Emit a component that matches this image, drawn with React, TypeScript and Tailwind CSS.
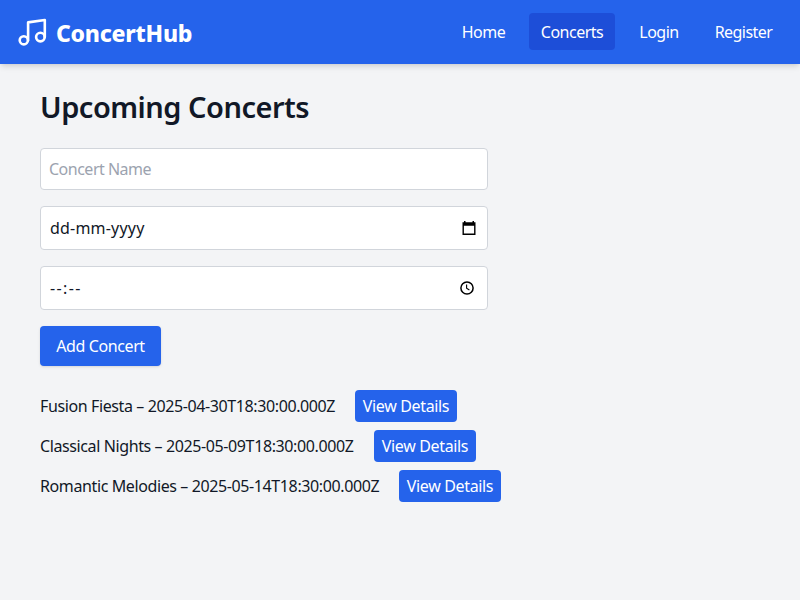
import React from "react";

const navBase = "flex h-[37px] items-center justify-center rounded pt-px";

const links = [
  { label: "Home", box: "w-[67px]", text: "tracking-[-0.5px]" },
  { label: "Concerts", box: "w-[86px] bg-[#1d4ed8]", text: "tracking-[-0.5px]" },
  { label: "Login", box: "w-[64px]", text: "tracking-[-0.5px]" },
  { label: "Register", box: "w-[81px]", text: "tracking-[-0.55px]" },
];

const concerts = [
  { name: "Fusion Fiesta", date: "2025-04-30T18:30:00.000Z", width: "w-[295px]" },
  { name: "Classical Nights", date: "2025-05-09T18:30:00.000Z", width: "w-[314px]" },
  { name: "Romantic Melodies", date: "2025-05-14T18:30:00.000Z", width: "w-[339px]" },
];

function NotesIcon() {
  return (
    <svg className="h-8 w-8" viewBox="0 0 32 32" fill="none" stroke="currentColor" strokeWidth="2.6" strokeLinecap="round" strokeLinejoin="round">
      <path d="M12.1 24.2V6.4L28.8 4v17" />
      <circle cx="7.8" cy="24.3" r="4.1" />
      <circle cx="24.4" cy="21.1" r="4.3" />
    </svg>
  );
}

function CalendarIcon() {
  return (
    <svg className="mb-px h-4 w-4" viewBox="0 0 16 16" fill="black">
      <path fillRule="evenodd" d="M3 1h1.5v1.3h7V1H13v1.3h1.5V15h-13V2.3H3V1zm-.1 4.7v7.9h10.2V5.7H2.9z" />
    </svg>
  );
}

function ClockIcon() {
  return (
    <svg className="h-4 w-4" viewBox="0 0 16 16" fill="none" stroke="black">
      <circle cx="8" cy="8" r="6.1" strokeWidth="1.5" />
      <path d="M7.6 4.5v3.8l2.8 1.7" strokeWidth="1.1" />
    </svg>
  );
}

export default function App() {
  return (
    <div className="min-h-[600px] bg-[#f3f4f6] font-['Noto_Sans','Open_Sans',sans-serif] text-base text-[#111827]">
      <nav className="flex h-16 items-center justify-between bg-[#2563eb] px-4 text-white shadow-md">
        <div className="flex items-center gap-2">
          <NotesIcon />
          <span className="pt-0.5 text-[23px] leading-8 font-extrabold tracking-[-0.25px]">ConcertHub</span>
        </div>
        <div className="flex gap-3 pb-px">
          {links.map((l) => (
            <a key={l.label} className={navBase + " " + l.box}>
              <span className={l.text}>{l.label}</span>
            </a>
          ))}
        </div>
      </nav>
      <main className="px-10 pt-6">
        <h1 className="mb-5 h-10 text-[29px] leading-[38px] font-semibold tracking-[-0.5px]">Upcoming Concerts</h1>
        <div className="flex w-[448px] flex-col gap-4">
          <div className="flex h-[42px] items-center rounded border border-[#d1d5db] bg-white px-2 tracking-[-0.5px] text-[#9ca3af]">Concert Name</div>
          <div className="flex h-11 items-center justify-between rounded border border-[#d1d5db] bg-white pr-2.5 pl-[9px]">
            <span className="tracking-[0.2px]">dd-mm-yyyy</span>
            <CalendarIcon />
          </div>
          <div className="flex h-11 items-center justify-between rounded border border-[#d1d5db] bg-white pr-3 pl-[9px]">
            <span className="tracking-[1.4px]">--:--</span>
            <ClockIcon />
          </div>
          <button className="h-10 w-[121px] rounded bg-[#2563eb] tracking-[-0.4px] text-white shadow">Add Concert</button>
        </div>
        <ul className="mt-6 flex flex-col gap-2">
          {concerts.map((c) => (
            <li key={c.name} className="flex h-8 items-center gap-5">
              <span className={c.width + " tracking-[-0.39px] whitespace-nowrap"}>{c.name} – {c.date}</span>
              <button className="h-8 w-[102px] rounded bg-[#2563eb] tracking-[-0.35px] text-white">View Details</button>
            </li>
          ))}
        </ul>
      </main>
    </div>
  );
}
